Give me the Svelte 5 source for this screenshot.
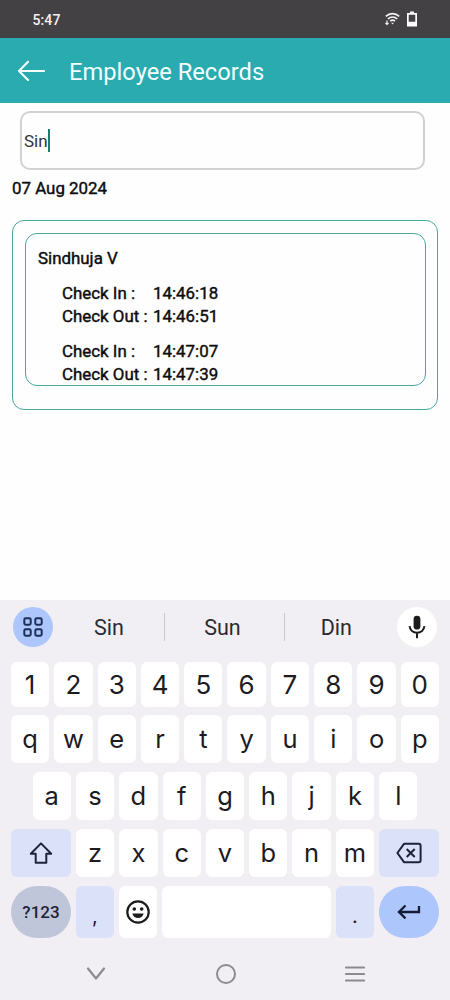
<script lang="ts">
    type CheckEntry = {
        checkIn: string;
        checkOut: string;
    };

    type EmployeeRecord = {
        name: string;
        entries: CheckEntry[];
    };

    let query = $state("Sin");

    const date = "07 Aug 2024";
    const records: EmployeeRecord[] = [
        {
            name: "Sindhuja V",
            entries: [
                { checkIn: "14:46:18", checkOut: "14:46:51" },
                { checkIn: "14:47:07", checkOut: "14:47:39" },
            ],
        },
    ];

    const suggestions = ["Sin", "Sun", "Din"];
    const numberRow = "1234567890".split("");
    const topRow = "qwertyuiop".split("");
    const homeRow = "asdfghjkl".split("");
    const bottomRow = "zxcvbnm".split("");

    const type = (key: string) => (query += key);
    const erase = () => (query = query.slice(0, -1));
</script>

{#snippet letters(keys: string[])}
    {#each keys as key}
        <button class="key" onclick={() => type(key)}>{key}</button>
    {/each}
{/snippet}

<div class="screen">
    <div class="status">
        <span class="status_time">5:47</span>
        <div class="status_icons">
            <svg width="15" height="14" viewBox="0 0 15 14" fill="none" stroke="#f2f2f2" stroke-width="1.6">
                <path d="M.8 4.4C4.6.7 10.4.7 14.2 4.4" />
                <path d="M2.9 7C5.7 4.4 9.5 4.4 12.2 7" />
                <path d="M5.2 9.2c1.5-1.3 3.3-1.3 4.8 0" />
                <path d="M6.2 10.8h2.6L7.5 12.4z" fill="#f2f2f2" stroke="none" />
                <path d="M2 8.4v4M.5 11l1.5 1.5L3.5 11" stroke-width="1.2" />
            </svg>
            <svg width="10" height="16" viewBox="0 0 10 16">
                <path d="M3 .5h4v1.6h3v13.4H0V2.1h3zM1.7 3.8v7h6.6v-7z" fill="#fff" fill-rule="evenodd" />
            </svg>
        </div>
    </div>

    <header class="appbar">
        <svg width="28" height="22" viewBox="0 0 28 22" fill="none" stroke="#f4ffff" stroke-width="2.1" stroke-linecap="round" stroke-linejoin="round">
            <path d="M11 1.8 2 11l9 9M2 11h25" />
        </svg>
        <h1 class="appbar_title">Employee Records</h1>
    </header>

    <main class="content">
        <div class="search">
            <span>{query}</span><i class="search_caret"></i>
        </div>

        <p class="date">{date}</p>

        <div class="day">
            {#each records as record}
                <section class="record">
                    <h2 class="record_name">{record.name}</h2>
                    {#each record.entries as entry}
                        <div class="entry">
                            <span>Check In :</span><span>{entry.checkIn}</span>
                            <span>Check Out :</span><span>{entry.checkOut}</span>
                        </div>
                    {/each}
                </section>
            {/each}
        </div>
    </main>

    <div class="keyboard">
        <div class="suggest">
            <button class="round round-blue" aria-label="Toolbar">
                <svg width="20" height="20" viewBox="0 0 20 20" fill="none" stroke="#1c2f57" stroke-width="2">
                    <rect x="1.3" y="1.3" width="6.4" height="6.4" rx="1.4" />
                    <rect x="12.3" y="1.3" width="6.4" height="6.4" rx="1.4" />
                    <rect x="1.3" y="12.3" width="6.4" height="6.4" rx="1.4" />
                    <rect x="12.3" y="12.3" width="6.4" height="6.4" rx="1.4" />
                </svg>
            </button>
            <div class="suggest_words">
                {#each suggestions as word}
                    <button class="suggest_word" onclick={() => (query = word)}>{word}</button>
                {/each}
            </div>
            <button class="round" aria-label="Voice input">
                <svg width="18" height="24" viewBox="0 0 18 24" fill="none" stroke="#1d1d1f" stroke-width="2">
                    <rect x="5.6" y=".8" width="6.8" height="13.8" rx="3.4" fill="#1d1d1f" stroke="none" />
                    <path d="M1.6 11.2c.4 4.1 3.5 6.5 7.4 6.5s7-2.4 7.4-6.5M9 17.7v5.5" />
                </svg>
            </button>
        </div>

        <div class="row row-numbers">{@render letters(numberRow)}</div>
        <div class="row">{@render letters(topRow)}</div>
        <div class="row row-home">{@render letters(homeRow)}</div>
        <div class="row">
            <button class="key key-wide key-tint" aria-label="Shift">
                <svg width="24" height="24" viewBox="0 0 24 24" fill="none" stroke="#1d2338" stroke-width="2" stroke-linejoin="round">
                    <path d="M12 2.4 1.8 12.8h4.9v9h10.600v-9h4.900z" />
                </svg>
            </button>
            {@render letters(bottomRow)}
            <button class="key key-wide key-tint" aria-label="Backspace" onclick={erase}>
                <svg width="26" height="22" viewBox="0 0 26 22" fill="none" stroke="#1d2338" stroke-width="2" stroke-linejoin="round">
                    <path d="M8 1.8h14.6q2 0 2 2v14.4q0 2-2 2H8L1.4 11z" />
                    <path d="m10.7 7 8 8M18.7 7l-8 8" />
                </svg>
            </button>
        </div>
        <div class="row row-last">
            <button class="key key-wide key-mode">?123</button>
            <button class="key key-tint key-punct" onclick={() => type(",")}>,</button>
            <button class="key" aria-label="Emoji">
                <svg width="26" height="26" viewBox="0 0 26 26">
                    <circle cx="13" cy="13" r="10.7" fill="none" stroke="#1b1b1d" stroke-width="2.2" />
                    <circle cx="9.3" cy="10" r="1.8" fill="#1b1b1d" />
                    <circle cx="16.7" cy="10" r="1.8" fill="#1b1b1d" />
                    <path d="M7.3 14.4h11.4c-.9 2.9-3 4.6-5.7 4.6s-4.8-1.7-5.7-4.6z" fill="#1b1b1d" />
                </svg>
            </button>
            <button class="key key-space" aria-label="Space" onclick={() => type(" ")}></button>
            <button class="key key-tint key-punct" onclick={() => type(".")}>.</button>
            <button class="key key-wide key-enter" aria-label="Enter">
                <svg width="24" height="16" viewBox="0 0 24 16" fill="none" stroke="#141d35" stroke-width="2.3">
                    <path d="M22 2v6H2.5M8.5 1.5 2 8l6.5 6.3" />
                </svg>
            </button>
        </div>

        <nav class="nav">
            <svg width="20" height="14" viewBox="0 0 20 14" fill="none" stroke="#8f8a90" stroke-width="2.2" stroke-linecap="round" stroke-linejoin="round">
                <path d="M2 1.500l8 10 8-10" />
            </svg>
            <svg width="22" height="22" viewBox="0 0 22 22" fill="none" stroke="#8f8a90" stroke-width="2">
                <circle cx="11" cy="11" r="9" />
            </svg>
            <svg width="20" height="18" viewBox="0 0 20 18" fill="none" stroke="#8f8a90" stroke-width="2.1" stroke-linecap="round">
                <path d="M1 2.500h18M1 9h18M1 15.500h18" />
            </svg>
        </nav>
    </div>
</div>

<style>
    :global(body) {
        background: #fefefe;
    }

    .screen {
        display: flex;
        flex-direction: column;
        width: 450px;
        height: 1000px;
        overflow: hidden;
        font-family: Roboto, "Liberation Sans", sans-serif;
        color: #0c0c0c;
    }

    h1,
    h2,
    p {
        margin: 0;
    }

    svg {
        display: block;
        flex: none;
    }

    button {
        display: flex;
        align-items: center;
        justify-content: center;
        border: 0;
        padding: 0;
        background: none;
        color: inherit;
        font: inherit;
    }

    .status {
        display: flex;
        flex: none;
        align-items: center;
        justify-content: space-between;
        height: 38px;
        box-sizing: border-box;
        padding: 0 33px 0 32.5px;
        background: #444145;
        color: #f2f2f2;
    }

    .status_time {
        padding-top: 1px;
        font-size: 14px;
        font-weight: 500;
        letter-spacing: 0.1px;
    }

    .status_icons {
        display: flex;
        align-items: center;
        gap: 7px;
    }

    .appbar {
        display: flex;
        flex: none;
        align-items: center;
        gap: 24px;
        height: 65px;
        padding-left: 17px;
        background: #2aabb0;
    }

    .appbar_title {
        padding-top: 3px;
        font-size: 23.7px;
        font-weight: 400;
        line-height: 28px;
        color: #f4ffff;
    }

    .content {
        flex: 1;
        padding: 8px 12px 0;
    }

    .search {
        display: flex;
        align-items: center;
        height: 59px;
        box-sizing: border-box;
        margin: 0 13px 0 8px;
        padding-left: 2px;
        border: 2px solid #d1d1d3;
        border-radius: 10px;
        font-size: 17px;
        color: #333;
    }

    .search_caret {
        width: 2.5px;
        height: 23px;
        margin-bottom: 1px;
        background: #16806f;
    }

    .date,
    .record_name,
    .entry {
        font-size: 16.9px;
        font-weight: 400;
        -webkit-text-stroke: 0.4px;
    }

    .date {
        margin-top: 8px;
        line-height: 20px;
    }

    .day {
        height: 190px;
        box-sizing: border-box;
        margin-top: 22px;
        padding: 12px 11px 0 12px;
        border: 1px solid #45a99f;
        border-radius: 12px;
    }

    .record {
        height: 153px;
        box-sizing: border-box;
        padding: 13px 12px 0;
        border: 1px solid #45a99f;
        border-radius: 12px;
    }

    .record_name {
        margin-bottom: 13px;
        line-height: 22px;
    }

    .entry {
        display: grid;
        grid-template-columns: 91px 1fr;
        margin: 0 0 12px 24px;
        line-height: 23px;
    }

    .keyboard {
        display: flex;
        flex: none;
        flex-direction: column;
        gap: 9.5px;
        height: 400px;
        box-sizing: border-box;
        padding: 7px 11px 0;
        background: #f1eef4;
        font-family: Inter, Roboto, sans-serif;
        color: #1d1b1f;
    }

    .suggest {
        display: flex;
        align-items: center;
        margin: 0 2px 5.5px 1.5px;
    }

    .round {
        flex: none;
        width: 40px;
        height: 40px;
        border-radius: 50%;
        background: #fff;
    }

    .round-blue {
        background: #adc6fc;
    }

    .suggest_words {
        display: grid;
        flex: 1;
        grid-template-columns: 111px 120px 1fr;
    }

    .suggest_word {
        height: 28px;
        padding-left: 2px;
        font-family: Roboto, sans-serif;
        font-size: 21.5px;
        color: #2c2a30;
    }

    .suggest_word + .suggest_word {
        padding: 0 3px 0 0;
        border-left: 1px solid #cbc8cf;
    }

    .suggest_word:last-child {
        padding-right: 9px;
    }

    .row {
        display: flex;
        flex: none;
        gap: 5px;
        height: 47.5px;
    }

    .row-numbers {
        height: 44.5px;
        margin-bottom: -1px;
    }

    .row-home {
        padding: 0 21.6px;
    }

    .row-last {
        height: 51.5px;
    }

    .key {
        flex: 1;
        min-width: 0;
        border-radius: 6px;
        background: #fff;
        font-size: 26px;
    }

    .row:not(.row-numbers) .key {
        font-size: 25.5px;
    }

    .key-wide {
        flex: 0 0 60px;
    }

    .key-tint {
        background: #dce1fa;
    }

    .row .key.key-punct {
        padding-top: 8px;
        font-size: 20px;
    }

    .row .key.key-mode {
        border-radius: 26px;
        background: #c0c6da;
        font-family: Roboto, sans-serif;
        font-size: 17px;
        font-weight: 500;
        color: #1d2338;
    }

    .key-space {
        flex: 0 0 169px;
    }

    .key-enter {
        border-radius: 26px;
        background: #adc6fc;
    }

    .nav {
        display: flex;
        align-items: center;
        justify-content: space-between;
        height: 58px;
        padding: 0 74px 0 75px;
    }
</style>
